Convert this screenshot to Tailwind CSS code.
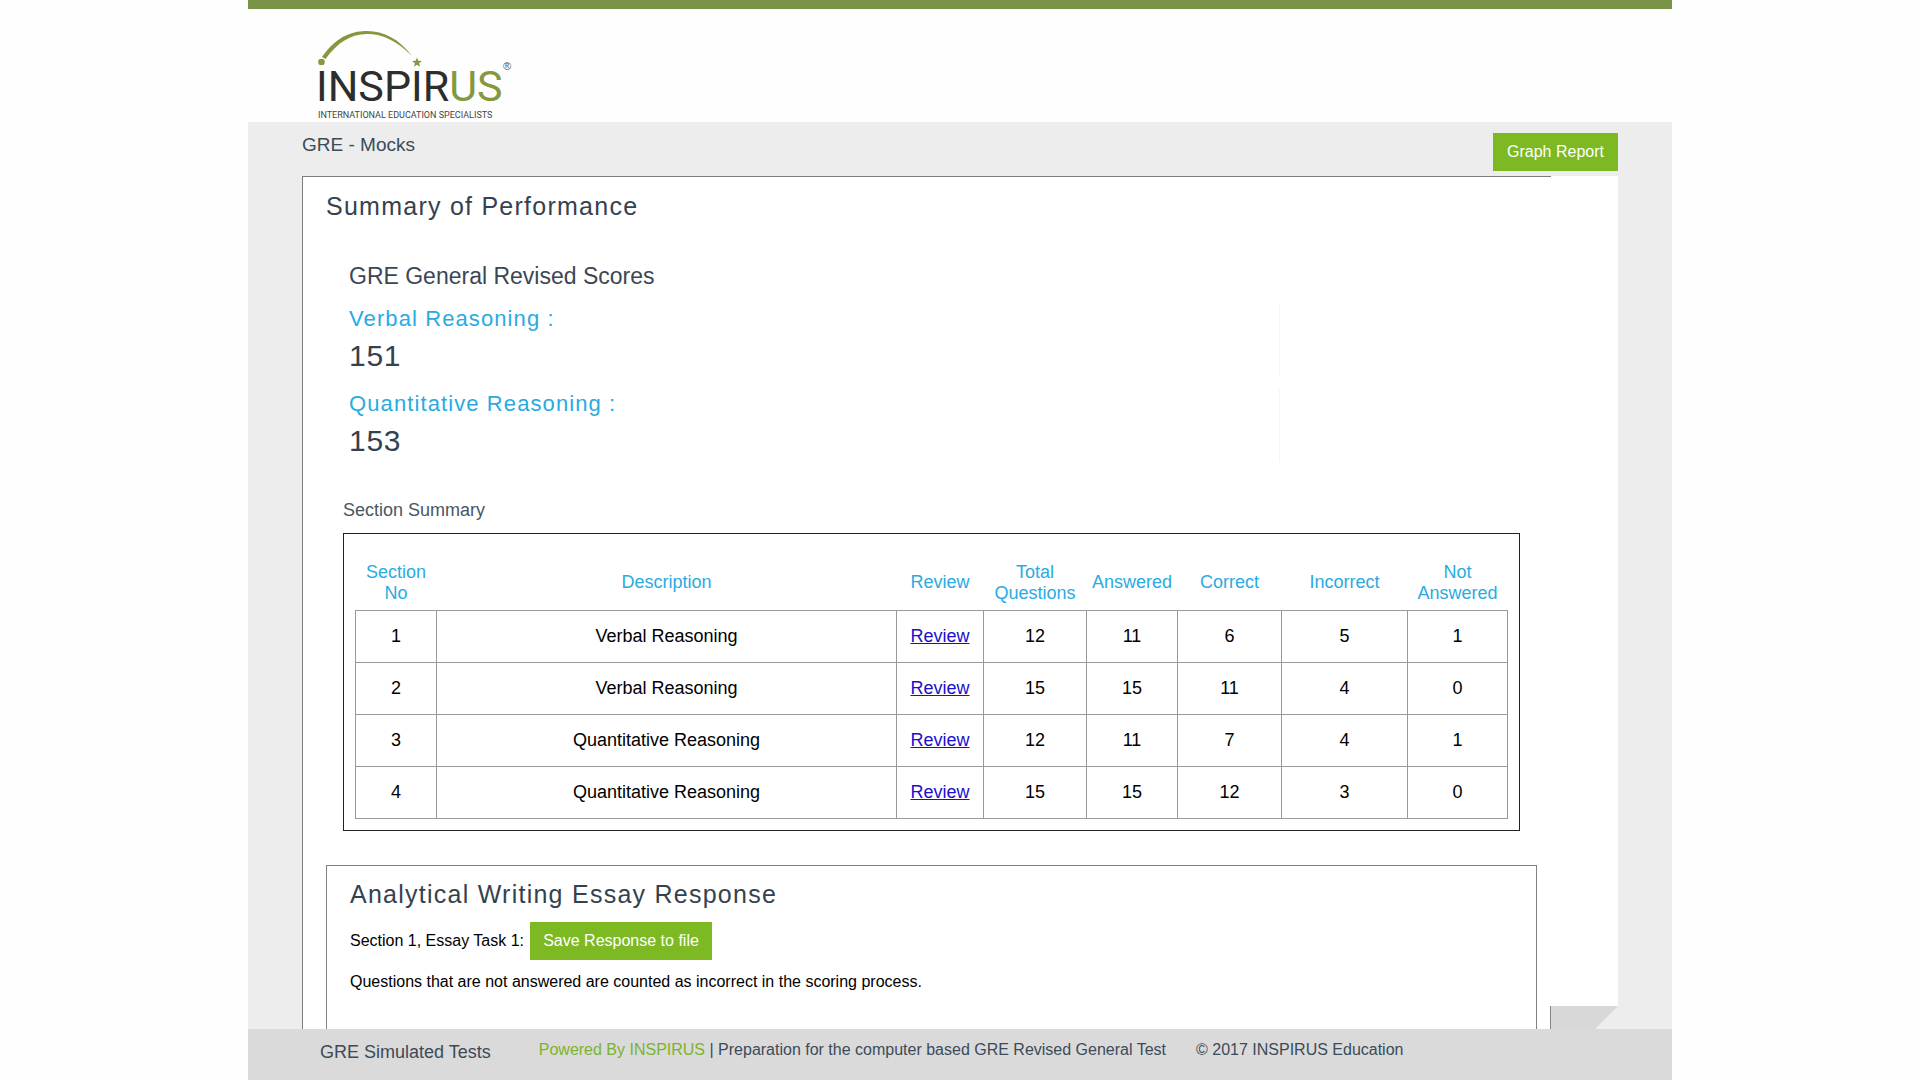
<!DOCTYPE html>
<html lang="en">
<head>
<meta charset="utf-8">
<title>GRE - Mocks</title>
<script src="https://cdn.jsdelivr.net/npm/@tailwindcss/browser@4"></script>
</head>
<body class="bg-[#fefefe] font-['Liberation_Sans',Arial,sans-serif] text-black">
<div class="mx-auto flex min-h-screen w-full max-w-[1424px] flex-col border-t-9 border-[#789346]">
  <header class="h-[113px] px-[69px] pt-5">
    <svg class="h-[92px] w-[200px]" viewBox="0 0 200 92" role="img" aria-label="Inspirus, International Education Specialists">
      <path d="M5 28C21 5 38 2 50 2C67 2 82 10 95 27C80 12 66 5 50 5C34 5 21 13 8.500 30Z" fill="#85983f"/>
      <circle cx="4.500" cy="33" r="3.300" fill="#85983f"/>
      <path d="M100 28.500l1.300 3.300 3.600.2-2.800 2.200.9 3.500-3-1.900-3 1.900.9-3.500-2.800-2.200 3.600-.2Z" fill="#85983f"/>
      <text x="-1" y="72" font-size="43" font-family="Roboto" fill="#2d2d2d">INSPIR<tspan fill="#85983f">US</tspan></text>
      <text x="186" y="41" font-size="11" font-family="Liberation Sans" fill="#555">®</text>
      <text x="1" y="89" font-size="9" font-family="Roboto" fill="#444">INTERNATIONAL EDUCATION SPECIALISTS</text>
    </svg>
  </header>

  <main class="flex flex-1 flex-col bg-[#ededed] px-[54px]">
    <div class="flex h-[54px] items-start justify-between">
      <h1 class="pt-[11px] text-[19px] leading-6 text-[#3b4b59]">GRE - Mocks</h1>
      <button type="button" class="mt-[11px] h-[38px] w-[125px] bg-[#7cb922] text-base text-white">Graph Report</button>
    </div>

    <div class="relative flex flex-1 flex-col bg-white">
      <section class="mr-[67px] flex flex-1 flex-col border-t border-l border-[#7d7d7d] pr-3.5 pl-[23px]">
        <h2 class="pt-3.5 text-[25px] leading-[30px] tracking-wider text-[#34424f]">Summary of Performance</h2>

        <div class="mt-10 mr-[257px] pl-[23px]">
          <h3 class="text-[23px] leading-[30px] text-[#3b4754]">GRE General Revised Scores</h3>
          <dl class="mt-[13px] flex flex-col gap-3">
            <div class="h-[73px] border-r border-[#f5f5f5]">
              <dt class="text-[22px] leading-[30px] tracking-wider text-[#29abe2]">Verbal Reasoning :</dt>
              <dd class="pt-[3px] text-3xl leading-[38px] tracking-wide text-[#34424f]">151</dd>
            </div>
            <div class="h-[73px] border-r border-[#f5f5f5]">
              <dt class="text-[22px] leading-[30px] tracking-wider text-[#29abe2]">Quantitative Reasoning :</dt>
              <dd class="pt-[3px] text-3xl leading-[38px] tracking-wide text-[#34424f]">153</dd>
            </div>
          </dl>
        </div>

        <h3 class="mt-9 pl-[17px] text-lg leading-6 text-[#4a5661]">Section Summary</h3>
        <div class="mt-[11px] mr-[17px] ml-[17px] border border-[#222] px-[11px] pt-[22px] pb-[11px]">
          <table class="w-full table-fixed border-collapse text-center text-lg">
            <colgroup>
              <col class="w-[81px]"><col><col class="w-[87px]"><col class="w-[103px]"><col class="w-[91px]"><col class="w-[104px]"><col class="w-[126px]"><col class="w-[100px]">
            </colgroup>
            <thead>
              <tr class="h-[54px] leading-[21px] text-[#29abe2] [&>th]:p-0 [&>th]:font-normal">
                <th scope="col">Section<br>No</th><th scope="col">Description</th><th scope="col">Review</th><th scope="col">Total<br>Questions</th><th scope="col">Answered</th><th scope="col">Correct</th><th scope="col">Incorrect</th><th scope="col">Not<br>Answered</th>
              </tr>
            </thead>
            <tbody class="[&_td]:h-[52px] [&_td]:border [&_td]:border-[#999] [&_td]:p-0 [&_a]:text-[#1a0fd0] [&_a]:underline">
              <tr><td>1</td><td>Verbal Reasoning</td><td><a href="#s1">Review</a></td><td>12</td><td>11</td><td>6</td><td>5</td><td>1</td></tr>
              <tr><td>2</td><td>Verbal Reasoning</td><td><a href="#s2">Review</a></td><td>15</td><td>15</td><td>11</td><td>4</td><td>0</td></tr>
              <tr><td>3</td><td>Quantitative Reasoning</td><td><a href="#s3">Review</a></td><td>12</td><td>11</td><td>7</td><td>4</td><td>1</td></tr>
              <tr><td>4</td><td>Quantitative Reasoning</td><td><a href="#s4">Review</a></td><td>15</td><td>15</td><td>12</td><td>3</td><td>0</td></tr>
            </tbody>
          </table>
        </div>

        <section class="mt-[34px] flex-1 border-x border-t border-[#808080] px-[23px] pt-[13px]">
          <h2 class="text-[25px] leading-[30px] tracking-wider text-[#34424f]">Analytical Writing Essay Response</h2>
          <div class="mt-[13px] flex items-center gap-1.5 text-base">
            <p>Section 1, Essay Task 1:</p>
            <button type="button" class="h-[38px] w-[182px] bg-[#7cb922] text-white">Save Response to file</button>
          </div>
          <p class="mt-2.5 text-base">Questions that are not answered are counted as incorrect in the scoring process.</p>
        </section>
      </section>
      <svg class="absolute right-0 bottom-0 h-[23px] w-[68px]" viewBox="0 0 68 23" aria-hidden="true">
        <rect width="68" height="23" fill="#ededed"/>
        <path d="M0 0H68L45 23H0Z" fill="#d8d8d8"/>
        <path d="M.500 0V23" stroke="#858585"/>
      </svg>
    </div>
  </main>

  <footer class="flex h-[51px] items-start bg-[#dadada] pl-[72px] text-base leading-6 text-[#3b4b59]">
    <p class="pt-[11px] text-lg leading-6">GRE Simulated Tests</p>
    <p class="ml-12 pt-[9px]"><a href="#inspirus" class="text-[#7cb32e]">Powered By INSPIRUS</a> | Preparation for the computer based GRE Revised General Test</p>
    <p class="ml-[30px] pt-[9px]">© 2017 INSPIRUS Education</p>
  </footer>
</div>
</body>
</html>
